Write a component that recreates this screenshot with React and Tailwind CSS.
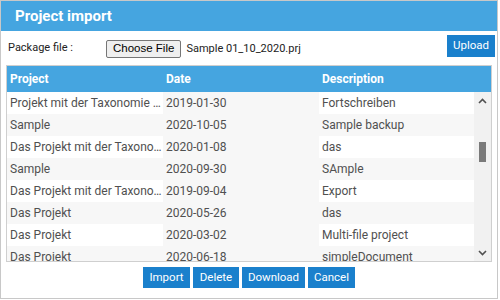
import React from "react";

const rows = [
  ["Projekt mit der Taxonomie …", "2019-01-30", "Fortschreiben"],
  ["Sample", "2020-10-05", "Sample backup"],
  ["Das Projekt mit der Taxono…", "2020-01-08", "das"],
  ["Sample", "2020-09-30", "SAmple"],
  ["Das Projekt mit der Taxono…", "2019-09-04", "Export"],
  ["Das Projekt", "2020-05-26", "das"],
  ["Das Projekt", "2020-03-02", "Multi-file project"],
  ["Das Projekt", "2020-06-18", "simpleDocument"],
];

export default function App() {
  return (
    <div className="w-[500px] h-[300px] bg-white font-['Roboto',sans-serif]">
      <div className="w-[498px] h-[299px] border border-[#c8c8c8] flex flex-col">
        <div className="h-[30px] bg-[#45a5e0] flex items-center pl-[14px] text-white font-bold text-[15px]">
          Project import
        </div>
        <div className="h-[34px] flex items-center pl-[7px] pr-[2px]">
          <span className="text-[11px] text-[#222] w-[98px]">Package file :</span>
          <span className="h-[18px] px-[6px] flex items-center border border-[#767676] rounded-[2px] bg-[#efefef] text-[11.5px] text-black font-['Liberation_Sans',sans-serif] mt-[2px]">
            Choose File
          </span>
          <span className="ml-[5px] text-[11px] text-[#222] mt-[2px]">Sample 01_10_2020.prj</span>
          <span className="ml-auto h-[22px] w-[48px] flex items-center justify-center bg-[#1a80cc] text-white text-[11.5px] -mt-[4px]">
            Upload
          </span>
        </div>
        <div className="mx-[5px] border border-[#cfcfcf] flex flex-col">
          <div className="h-[26px] bg-[#45a5e0] flex items-center text-white font-bold text-[12px]">
            <div className="w-[156px] pl-[3px]">Project</div>
            <div className="w-[156px] pl-[3px]">Date</div>
            <div className="flex-1 pl-[3px]">Description</div>
          </div>
          <div className="h-[169px] flex">
            <div className="flex-1 overflow-hidden">
              {rows.map((r, i) => (
                <div
                  key={i}
                  className={
                    "h-[22px] flex items-center text-[12px] text-[#505050] " +
                    (i % 2 === 1 ? "bg-[#f7f7f7]" : "bg-white")
                  }
                >
                  <div className="w-[156px] pl-[3px] whitespace-nowrap overflow-hidden">{r[0]}</div>
                  <div className="w-[156px] h-full flex items-center pl-[3px] bg-[#f7f7f7]">{r[1]}</div>
                  <div className="flex-1 pl-[3px] whitespace-nowrap overflow-hidden">{r[2]}</div>
                </div>
              ))}
            </div>
            <div className="w-[17px] bg-[#f1f1f1] flex flex-col items-center">
              <svg width="17" height="17" viewBox="0 0 17 17" className="mt-[1px]">
                <path d="M5 10 L8.5 6.5 L12 10" fill="none" stroke="#505050" strokeWidth="1.6" />
              </svg>
              <div className="mt-[32px] w-[7px] h-[20px] bg-[#7a7a7a]" />
              <div className="flex-1" />
              <svg width="17" height="17" viewBox="0 0 17 17">
                <path d="M5 7 L8.5 10.5 L12 7" fill="none" stroke="#505050" strokeWidth="1.6" />
              </svg>
            </div>
          </div>
        </div>
        <div className="flex justify-center gap-[3px] mt-[5px]">
          {[
            ["Import", "w-[47px]"],
            ["Delete", "w-[46px]"],
            ["Download", "w-[63px]"],
            ["Cancel", "w-[47px]"],
          ].map(([t, w]) => (
            <span
              key={t}
              className={w + " h-[21px] flex items-center justify-center bg-[#1a80cc] text-white text-[11.5px]"}
            >
              {t}
            </span>
          ))}
        </div>
      </div>
    </div>
  );
}
